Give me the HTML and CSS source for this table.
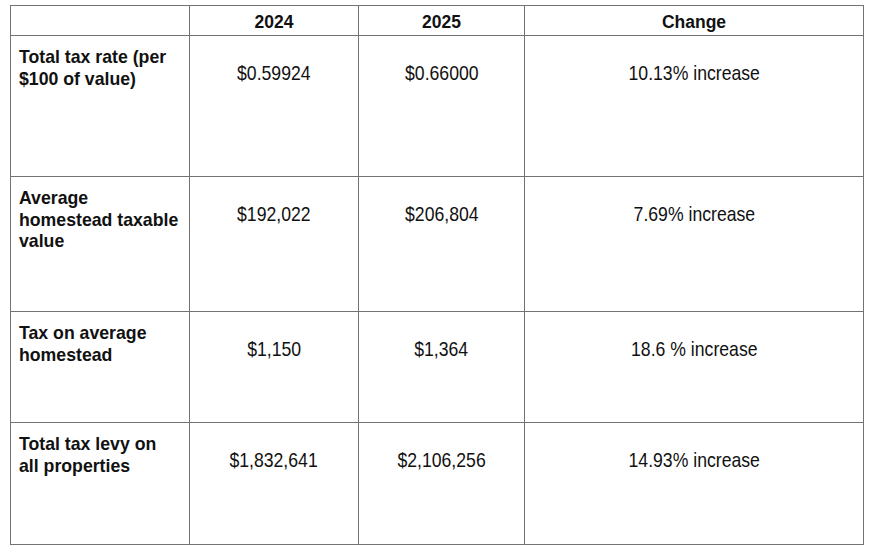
FILE: index.html
```html
<!DOCTYPE html>
<html lang="en">
<head>
<meta charset="utf-8">
<title>Tax comparison</title>
<link rel="stylesheet" href="styles.css">
</head>
<body>
<div class="tax-table">
  <div class="cell head"></div>
  <div class="cell head">2024</div>
  <div class="cell head">2025</div>
  <div class="cell head">Change</div>

  <div class="cell label">Total tax rate (per $100 of value)</div>
  <div class="cell value"><span class="narrow">$0.59924</span></div>
  <div class="cell value"><span class="narrow">$0.66000</span></div>
  <div class="cell value"><span class="narrow">10.13% increase</span></div>

  <div class="cell label">Average homestead taxable value</div>
  <div class="cell value"><span class="narrow">$192,022</span></div>
  <div class="cell value"><span class="narrow">$206,804</span></div>
  <div class="cell value"><span class="narrow">7.69% increase</span></div>

  <div class="cell label">Tax on average homestead</div>
  <div class="cell value"><span class="narrow">$1,150</span></div>
  <div class="cell value"><span class="narrow">$1,364</span></div>
  <div class="cell value"><span class="narrow">18.6 % increase</span></div>

  <div class="cell label">Total tax levy on all properties</div>
  <div class="cell value"><span class="narrow">$1,832,641</span></div>
  <div class="cell value"><span class="narrow">$2,106,256</span></div>
  <div class="cell value"><span class="narrow">14.93% increase</span></div>
</div>
</body>
</html>
```

FILE: styles.css
```css
html, body {
  margin: 0;
  padding: 0;
  background: #ffffff;
}

body {
  padding: 5px 0 0 10px;
  font-family: "Liberation Sans", Arial, sans-serif;
  color: #111111;
}

.tax-table {
  display: grid;
  grid-template-columns: 178px 168px 165px 338px;
  grid-template-rows: 29px 140px 134px 110px 121px;
  gap: 1px;
  padding: 1px;
  width: max-content;
  background: #737373;
}

.cell {
  background: #ffffff;
  box-sizing: border-box;
}

.head {
  font-weight: bold;
  font-size: 17.5px;
  line-height: 21.5px;
  text-align: center;
  padding-top: 6px;
}

.label {
  font-weight: bold;
  font-size: 17.7px;
  line-height: 21.5px;
  padding: 11px 9.5px 0 8px;
}

.value {
  font-size: 21px;
  line-height: 24px;
  text-align: center;
  padding-top: 25px;
}

.narrow {
  display: inline-block;
  transform: scaleX(0.84);
  transform-origin: center top;
}
```
